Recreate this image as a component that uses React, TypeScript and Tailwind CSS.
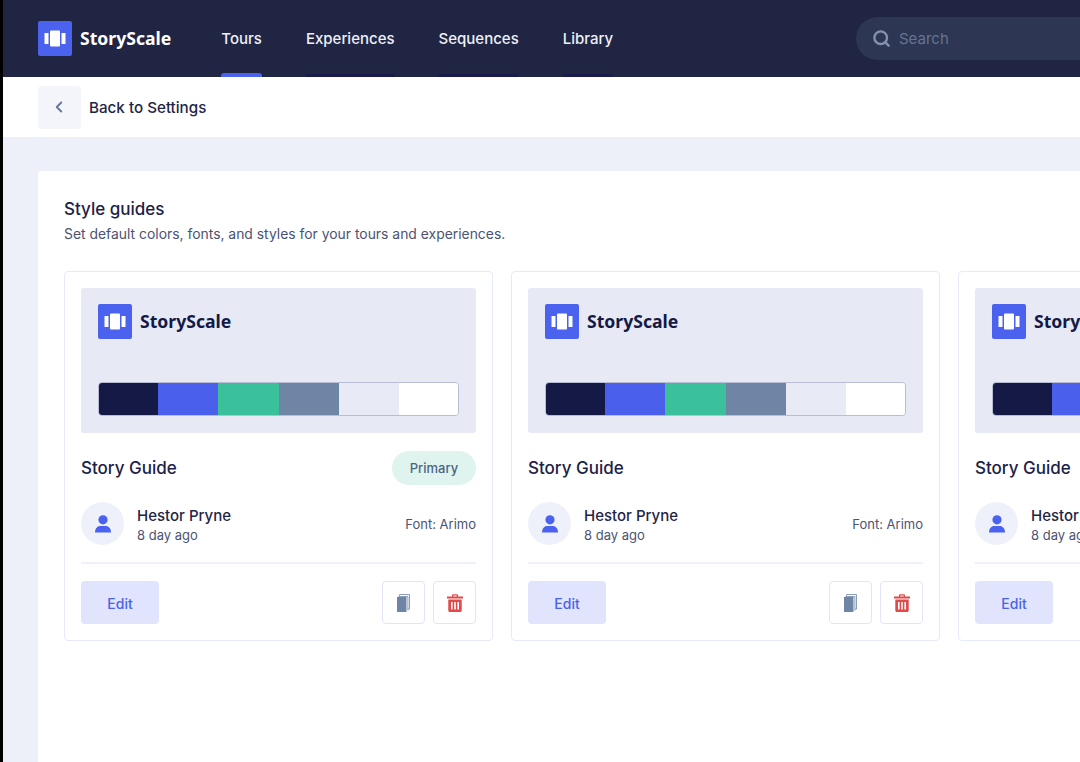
import { ChevronLeft, Search } from "lucide-react";

const inter = "font-['Inter','Liberation_Sans',sans-serif]";

const navItems = [
  { label: "Tours", active: true },
  { label: "Experiences", active: false },
  { label: "Sequences", active: false },
  { label: "Library", active: false },
];

const swatches = ["#141a45", "#4a5fec", "#3ac19c", "#6e85a5", "#e8eaf5", "#ffffff"];

function LogoMark() {
  return (
    <span className="flex h-[35px] w-[34px] shrink-0 items-center justify-center rounded-[2px] bg-[#4a62ee]">
      <svg width="34" height="35" viewBox="0 0 34 35" fill="#fff">
        <rect x="6.5" y="12" width="4" height="11" rx="0.5" />
        <rect x="12" y="9.5" width="10" height="16" rx="1" />
        <rect x="23.5" y="12" width="4" height="11" rx="0.5" />
      </svg>
    </span>
  );
}

function Logo({ className }: { className: string }) {
  return (
    <div className="flex items-center gap-2">
      <LogoMark />
      <span className={`font-['Noto_Sans',sans-serif] text-[17.6px] leading-none font-bold ${className}`}>
        StoryScale
      </span>
    </div>
  );
}

function UserIcon() {
  return (
    <svg width="16" height="18" viewBox="0 0 16 18" fill="#4a62ee">
      <circle cx="8" cy="4.8" r="4.6" />
      <path d="M0 17.5c0-4.4 2.6-6.6 5-6.6h6c2.4 0 5 2.2 5 6.6z" />
    </svg>
  );
}

function CopyIcon() {
  return (
    <svg width="13" height="18" viewBox="0 0 13 18">
      <path d="M2.5 1.9V.5h10v14.6h-1.6" fill="none" stroke="#8b9dba" strokeWidth="1" />
      <path d="M1.5 2.5h9.4v14" fill="none" stroke="#8b9dba" strokeWidth="1" />
      <rect x="0" y="3" width="9.5" height="15" fill="#6e85a5" />
    </svg>
  );
}

function TrashIcon() {
  return (
    <svg width="16" height="18" viewBox="0 0 16 18" fill="#df4a4a">
      <path d="M5 2.6V1.4C5 .7 5.6.2 6.2.2h3.6c.6 0 1.2.5 1.2 1.2v1.2H16v2H0v-2zm1.3 0h3.4V1.4H6.3z" />
      <path
        fillRule="evenodd"
        d="M1.3 5.6h13.4v10.9c0 .9-.7 1.5-1.5 1.5H2.8c-.8 0-1.5-.6-1.5-1.5zM4 8v7.5h1.6V8zm3.2 0v7.5h1.6V8zm3.2 0v7.5H12V8z"
      />
    </svg>
  );
}

function GuideCard({ primary }: { primary?: boolean }) {
  return (
    <div className="w-[429px] shrink-0 rounded-[4px] border border-[#e6e9f8] bg-white p-4">
      <div className="flex h-[145px] flex-col justify-between rounded-[3px] bg-[#e7e9f5] px-[17px] pt-4 pb-[17px]">
        <Logo className="text-[#141a45]" />
        <div className="grid h-[34px] grid-cols-[59px_60px_61px_60px_60px_1fr] overflow-hidden rounded-[4px] border border-[#b9bdd3]">
          {swatches.map((c) => (
            <div key={c} style={{ backgroundColor: c }} />
          ))}
        </div>
      </div>

      <div className="mt-[18px] flex h-[34px] items-center justify-between">
        <span className="pt-[2px] text-[17px] font-medium text-[#1c2247]">Story Guide</span>
        {primary && (
          <span className="flex h-[34px] w-[84px] items-center justify-center rounded-full bg-[#dff4ee] pt-[2px] text-[13px] font-medium text-[#4d6582]">
            Primary
          </span>
        )}
      </div>

      <div className="mt-[17px] flex items-center">
        <span className="flex h-[43px] w-[43px] shrink-0 items-center justify-center rounded-full bg-[#eef1fa]">
          <UserIcon />
        </span>
        <div className="ml-[13px] flex-1 pt-[2px]">
          <div className="text-[15px] leading-[20px] font-medium text-[#1f2547]">Hestor Pryne</div>
          <div className="text-[13px] leading-[18px] text-[#4b5373]">8 day ago</div>
        </div>
        <span className="pt-[2px] text-[13px] text-[#4b5373]">Font: Arimo</span>
      </div>

      <div className="mt-[17px] h-[2px] bg-[#eff1fa]" />

      <div className="mt-[17px] flex items-center gap-2">
        <button className="mr-auto h-[43px] w-[78px] rounded-[4px] bg-[#e0e4fd] pt-[2px] text-[14px] font-medium text-[#4a62ea]">
          Edit
        </button>
        <button className="flex h-[43px] w-[43px] items-center justify-center rounded-[4px] border border-[#e2e5f8] bg-white">
          <CopyIcon />
        </button>
        <button className="flex h-[43px] w-[43px] items-center justify-center rounded-[4px] border border-[#e2e5f8] bg-white">
          <TrashIcon />
        </button>
      </div>
    </div>
  );
}

export default function App() {
  return (
    <div className={`flex h-[762px] w-[1080px] overflow-hidden bg-black ${inter}`}>
      <div className="w-[3px] shrink-0" />
      <div className="flex min-w-0 flex-1 flex-col">
        <header className="flex h-[77px] shrink-0 items-center bg-[#1f2542] pl-[35px]">
          <Logo className="text-white" />
          <nav className="ml-[50px] flex h-full gap-[44px]">
            {navItems.map(({ label, active }) => (
              <a key={label} className="relative flex items-center pt-[2px] text-[15px] font-medium text-[#eef0f8]">
                {label}
                <span
                  className={
                    active
                      ? "absolute inset-x-0 bottom-0 h-[4px] rounded-t-[3px] bg-[#4a62ee]"
                      : "absolute inset-x-0 bottom-0 h-[3px] rounded-t-[2px] bg-[#171c4c]"
                  }
                />
              </a>
            ))}
          </nav>
          <div className="ml-auto flex h-[43px] w-[224px] items-center gap-[8px] rounded-l-[22px] bg-[#2d3652] pl-[16px]">
            <Search className="size-[19px] text-[#8491af]" strokeWidth={3} />
            <span className="pt-[2px] text-[15px] text-[#677391]">Search</span>
          </div>
        </header>

        <div className="flex h-[60px] shrink-0 items-center bg-white pl-[35px]">
          <span className="flex h-[43px] w-[43px] items-center justify-center rounded-[4px] bg-[#f3f5fb] pr-[1px]">
            <ChevronLeft className="size-[18px] text-[#64789b]" strokeWidth={2.5} />
          </span>
          <span className="ml-[8px] pt-[2px] text-[15.2px] font-medium text-[#1f2547]">Back to Settings</span>
        </div>

        <main className="min-h-0 flex-1 bg-[#edf0f9] pt-[34px] pl-[35px]">
          <section className="h-full rounded-tl-[3px] bg-white pt-[26px] pl-[26px]">
            <h1 className="text-[17px] leading-[24px] font-medium text-[#1c2247]">Style guides</h1>
            <p className="mt-[3px] text-[13.9px] leading-[20px] text-[#4b5373]">
              Set default colors, fonts, and styles for your tours and experiences.
            </p>
            <div className="mt-[27px] flex gap-[18px]">
              <GuideCard primary />
              <GuideCard />
              <GuideCard />
            </div>
          </section>
        </main>
      </div>
    </div>
  );
}
